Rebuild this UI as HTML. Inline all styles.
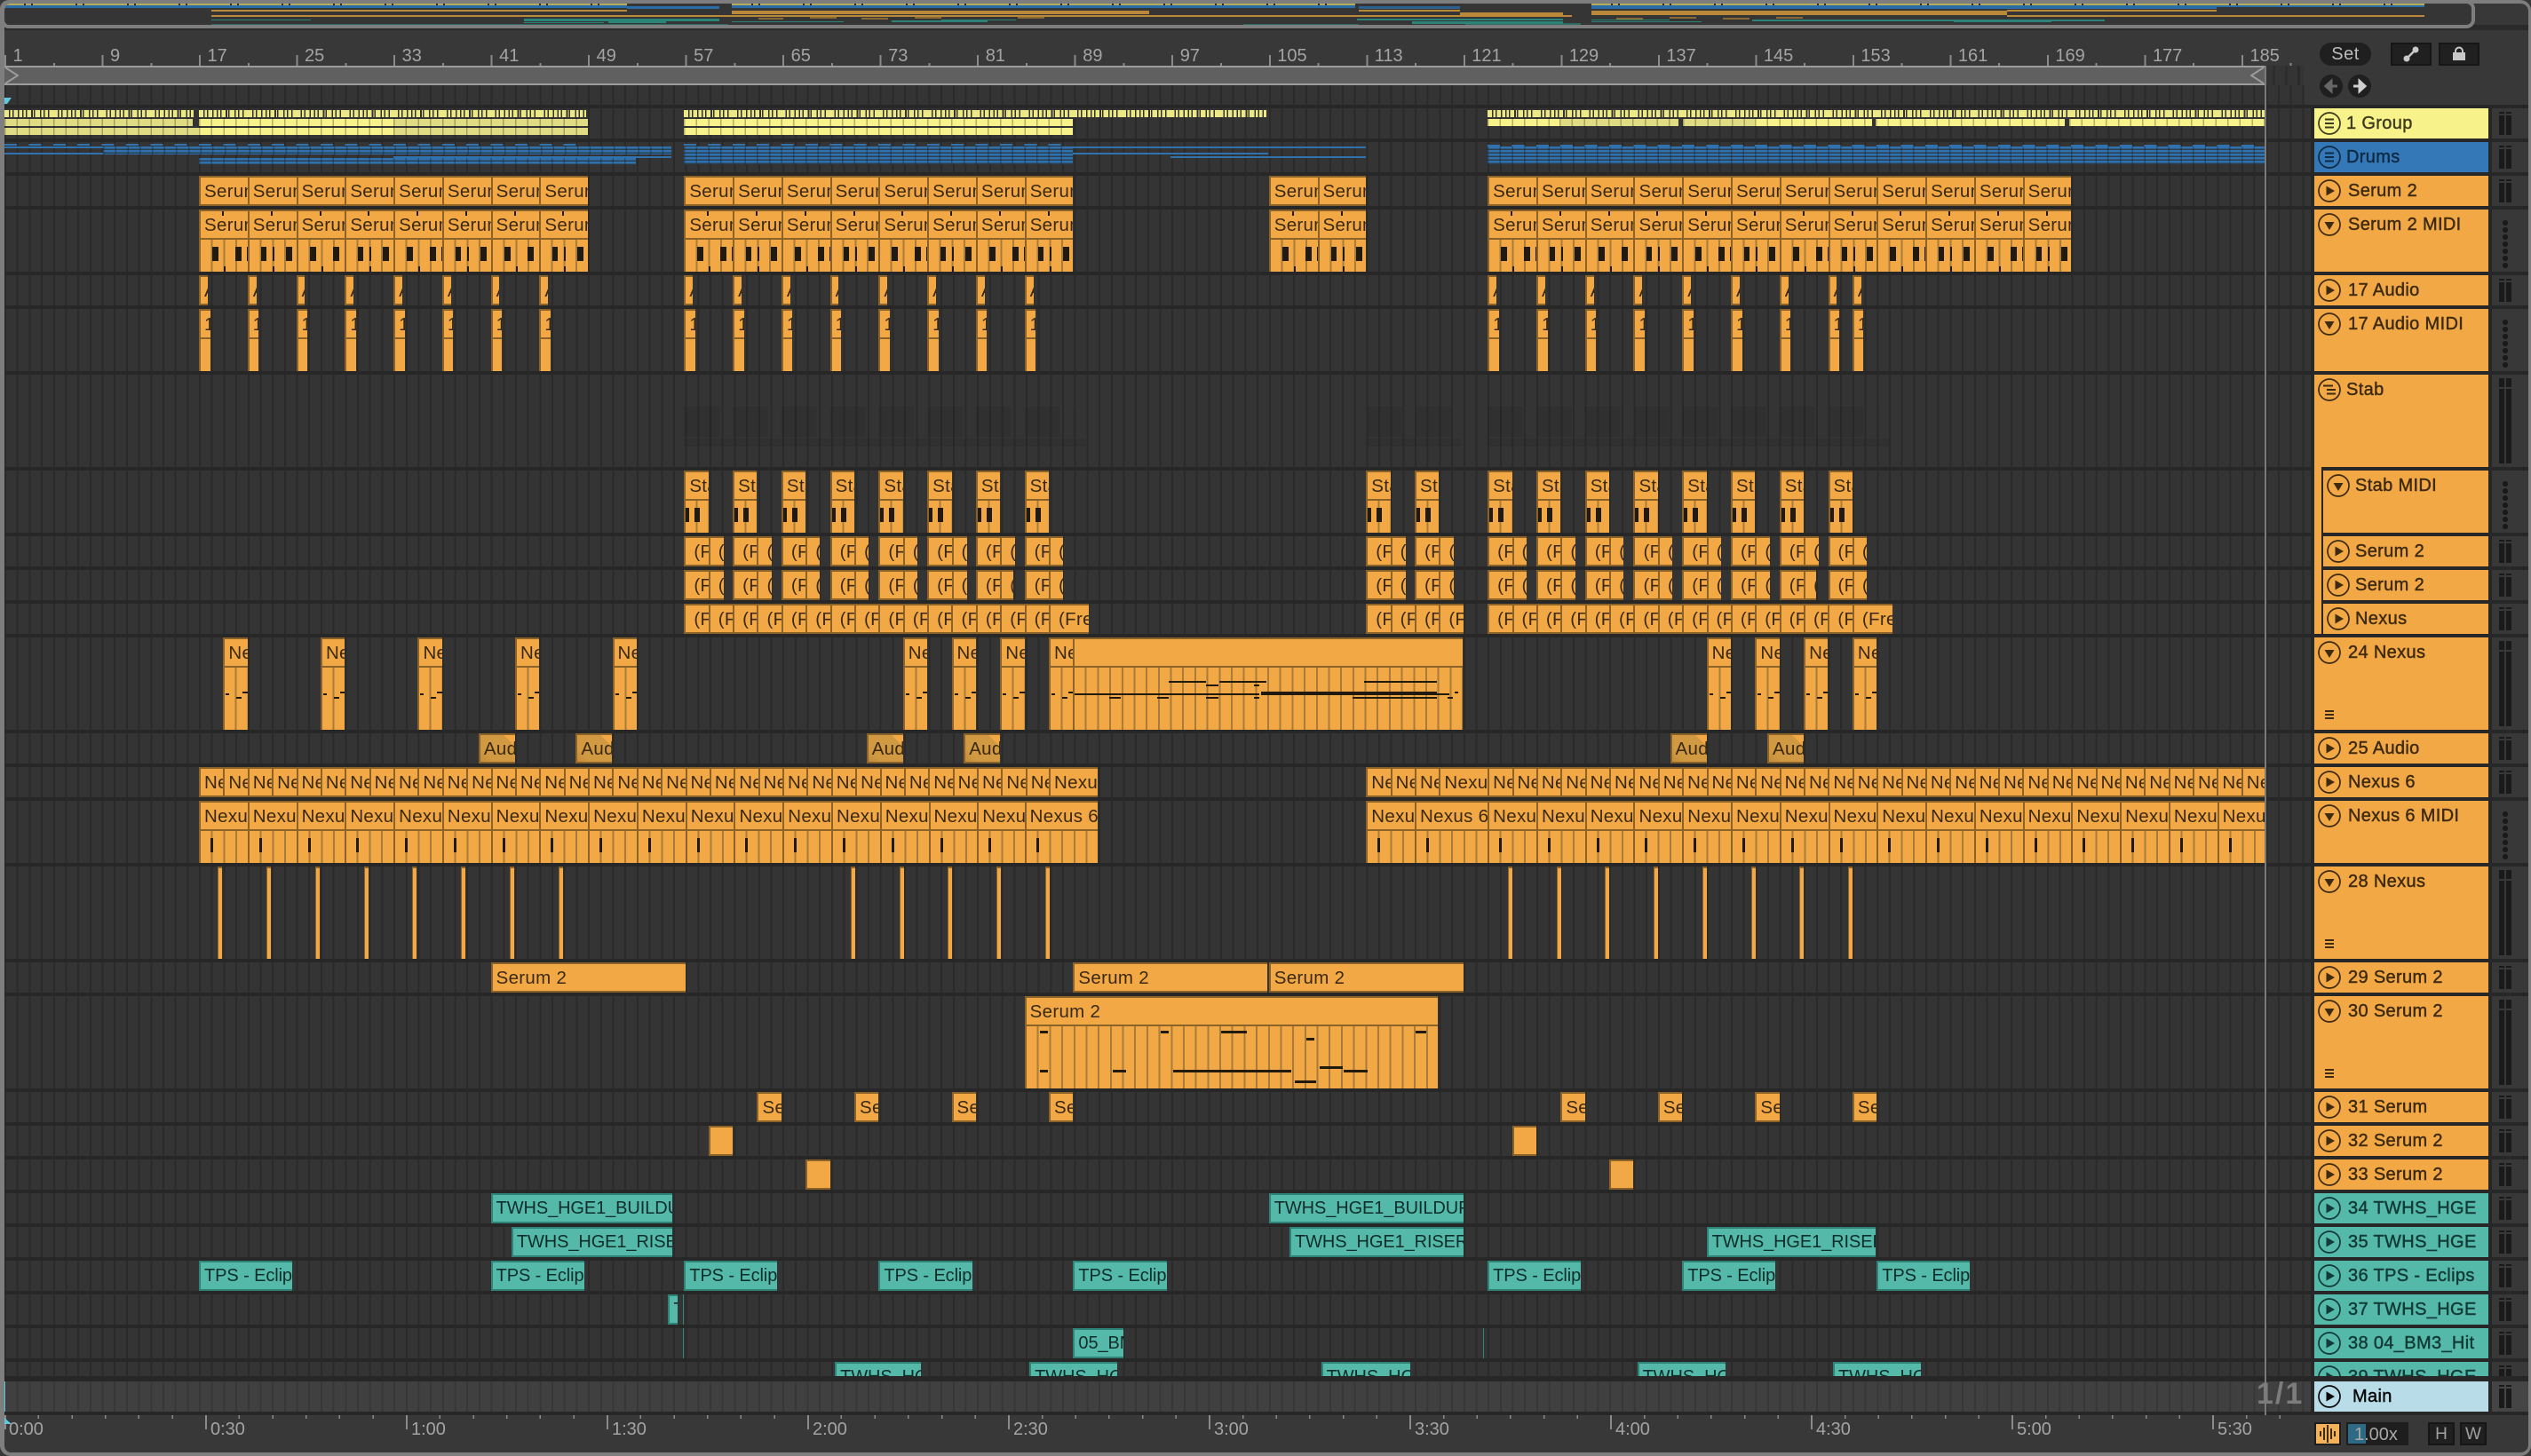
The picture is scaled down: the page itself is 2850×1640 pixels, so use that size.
<!DOCTYPE html>
<html><head><meta charset="utf-8"><title>Arrangement</title>
<style>
:root{--k:linear-gradient(#211a10,#211a10);--L:repeating-linear-gradient(90deg,transparent 0 11.69px,#a87c3a 11.69px 13.69px)}
html,body{margin:0;padding:0;width:2850px;height:1640px;overflow:hidden;background:#383838;font-family:"Liberation Sans",sans-serif}
#a{position:absolute;left:0;top:0;width:2850px;height:1640px;overflow:hidden}
#a>div,#a>svg,#a>span{position:absolute}
.bk{left:0;top:118px;width:2847px;height:1476px;background:#272727}
.r{position:absolute;left:5px;width:2597px;height:34px;overflow:hidden;background:repeating-linear-gradient(90deg,#2a2a2a 0 2px,#343434 2px 13.69px)}
.r>b,.r>u,.r>i{position:absolute;top:0;height:100%;left:calc((var(--s) - 1)*13.69px);width:calc((var(--e) - var(--s))*13.69px)}
.r>[style*="--s:57"],.r>[style*="--s:59"],.r>[style*="--s:61"],.r>[style*="--s:63"],.r>[style*="--s:65"],.r>[style*="--s:67"],.r>[style*="--s:69"],.r>[style*="--s:71"],.r>[style*="--s:72"],.r>[style*="--s:73"],.r>[style*="--s:75"],.r>[style*="--s:77"],.r>[style*="--s:79"],.r>[style*="--s:80"],.r>[style*="--s:81"],.r>[style*="--s:83"],.r>[style*="--s:85"],.r>[style*="--s:87"],.r>[style*="--s:89"]{margin-left:-1.3px}
.r>u{display:flex;text-decoration:none}
.r>u>b{position:relative;flex:1 1 0;min-width:0}
.w>b{width:calc(var(--w)*13.69px)!important}
b{display:block;box-sizing:border-box;overflow:hidden;white-space:nowrap;font-weight:400;font-size:20.5px;line-height:31px;letter-spacing:.3px;color:#3a2810;padding-left:4px;background:#f2a945;border:solid #8b6329;border-width:2px 0 2px 2px}
.m>b,.m>u>b{border-bottom:0}
.m b::after{content:"";position:absolute;left:0;right:0;top:30px;bottom:0;border-top:2px solid #8b6329;background:var(--n,none),var(--L)}
.sm b{--n:var(--k) 13px 8px/7px 16px no-repeat,var(--k) 39px 8px/7px 16px no-repeat,var(--k) 52px 8px/2px 16px no-repeat,var(--k) 26px 30px/2px 6px no-repeat;background:var(--k) 24px 0/2px 5px no-repeat,#f2a945}
.sm u b:nth-child(even){--n:var(--k) 13px 8px/6px 16px no-repeat,var(--k) 26px 8px/2px 16px no-repeat,var(--k) 41px 8px/7px 16px no-repeat,var(--k) 26px 30px/2px 6px no-repeat}
.st b{--n:var(--k) 0 8px/4px 16px no-repeat,var(--k) 10px 8px/6px 16px no-repeat}
.nx b{--n:var(--k) 1px 29px/4px 2px no-repeat,var(--k) 13px 33px/6px 2px no-repeat,var(--k) 20px 27px/6px 2px no-repeat}
.n6 b{--n:var(--k) 11px 8px/3px 16px no-repeat}
.h b,.h2 b{padding-left:9px}
.h u b:first-child{flex:0 0 27.38px}
.A b{background:linear-gradient(225deg,#f2a945 0 9px,#d19a42 9px 75%,#c48e3c)}
.T b{background:#54b9a9;border-color:#2f8478;color:#0e2d2a;font-size:20px;letter-spacing:-.1px}
.sl b{border-width:2px 0 0 1.5px}
.y{position:absolute;height:8px;background:repeating-linear-gradient(90deg,rgba(50,50,40,.35) 0 1.5px,transparent 1.5px 13.69px) ,#f8f28a}
.y.D{background:repeating-linear-gradient(90deg,rgba(50,50,40,.35) 0 1.5px,transparent 1.5px 13.69px),#e0dc84}
.y.da{background:repeating-linear-gradient(90deg,transparent 0 5px,#333 5px 6.5px,transparent 6.5px 9px,#333 9px 10.5px,transparent 10.5px 15px,#333 15px 16.5px,transparent 16.5px 20px,#333 20px 21.5px,transparent 21.5px 24px,#333 24px 25.5px,transparent 25.5px 30px,#333 30px 32px,transparent 32px 33px,#333 33px 34.5px,transparent 34.5px 40px,#333 40px 41.5px,transparent 41.5px 44px,#333 44px 45.5px,transparent 45.5px 49px,#333 49px 50.5px,transparent 50.5px 54.76px),#ece886}
.z{position:absolute;background:#2f72ad}
.z.d{background:repeating-linear-gradient(90deg,#2f72ad 0 14px,transparent 14px 27.38px)}
.z.f{background:repeating-linear-gradient(90deg,rgba(30,30,30,.4) 0 1.5px,transparent 1.5px 13.69px),repeating-linear-gradient(180deg,#2f72ad 0 2.5px,#2b3f52 2.5px 4px)}
.gh{background:repeating-linear-gradient(90deg,rgba(0,0,0,.075) 0 40px,transparent 40px 54.76px);position:absolute}
.p{left:2606px;width:196px;height:34px;box-sizing:border-box;padding-left:38px;font-size:20px;line-height:35px;letter-spacing:.35px;-webkit-text-stroke:.45px currentColor;white-space:nowrap;overflow:hidden;background:#f2a945;color:#3e2a0f}
.p svg{position:absolute;left:4px;top:4px;width:26px;height:26px;fill:currentColor;stroke:currentColor;-webkit-text-stroke:0}
.c{left:2616px;width:186px;padding-left:36px}
.c svg{left:4px}
.t70{height:70px}.t104{height:104px}
.te{background:#54b9a9;color:#123a36}
.q{left:2806px;width:41px;height:34px;background:var(--k) 8px 4px/6px 2px no-repeat,var(--k) 16px 4px/6px 2px no-repeat,var(--k) 8px 8px/6px 22px no-repeat,var(--k) 16px 8px/6px 22px no-repeat,#383838;--k:linear-gradient(#1a1a1a,#1a1a1a)}
.q.tq{height:104px;background:var(--k) 8px 4px/6px 10px no-repeat,var(--k) 16px 4px/6px 10px no-repeat,var(--k) 8px 16px/6px 84px no-repeat,var(--k) 16px 16px/6px 84px no-repeat,#383838}
.q.d{height:70px;background:#383838}
.q.d::before{content:"";position:absolute;left:11px;top:11px;width:8px;height:56px;background:radial-gradient(circle 3.2px,#1a1a1a 95%,transparent) 0 0/8px 8px}
.l{font-size:20px;line-height:22px;top:52px;color:#a4a4a4;left:calc(14.5px + (var(--s) - 1)*13.69px)}
.tl{font-size:20px;line-height:22px;top:1599px;color:#a4a4a4}
.o{height:2px}
.oy{background:repeating-linear-gradient(90deg,#b5ac5c 0 22px,#2b2b20 22px 24px,#b5ac5c 24px 30px,#2b2b20 30px 32px,#b5ac5c 32px 58px)}
.ob{background:#2a6ca6}.oo{background:#b98838}.ot{background:#2c8478}.od{background:#8a6a34}
.btn{background:#202020;border:2px solid #161616;box-sizing:border-box}
</style></head><body>
<svg width="0" height="0" style="position:absolute"><defs>
<symbol id="pl" viewBox="0 0 26 26"><circle cx="13" cy="13" r="12" fill="none" stroke-width="1.7"/><path d="M9.5 7.5L19 13L9.5 18.5Z" stroke="none"/></symbol>
<symbol id="dn" viewBox="0 0 26 26"><circle cx="13" cy="13" r="12" fill="none" stroke-width="1.7"/><path d="M7.5 10H18.5L13 19Z" stroke="none"/></symbol>
<symbol id="gr" viewBox="0 0 26 26"><circle cx="13" cy="13" r="12" fill="none" stroke-width="1.7"/><path d="M8 8.5H18M8 13H18M8 17.5H18" fill="none" stroke-width="2"/></symbol>
<symbol id="gs" viewBox="0 0 26 26"><circle cx="13" cy="13" r="12" fill="none" stroke-width="1.7"/><path d="M6 8.5H17M10 13H20M10 17.5H20" fill="none" stroke-width="2"/></symbol>
<symbol id="ml" viewBox="0 0 10 10"><path d="M0 1H10M0 5H10M0 9H10" fill="none" stroke-width="2"/></symbol>
</defs></svg>
<div id="a">
<!-- overview -->
<div style="left:0;top:28px;width:2850px;height:6px;background:#2a2a2a"></div>
<div style="left:0;top:0;width:2787px;height:32px;box-sizing:border-box;border:solid #7e7e7e;border-width:4px 4px 4px 5px;border-radius:10px;background:#353535"></div>
<div class="o oy" style="left:5px;top:4px;width:701px"></div>
<div class="o oy" style="left:824px;top:4px;width:702px"></div>
<div class="o oy" style="left:1792px;top:4px;width:938px"></div>
<div class="ob" style="left:5px;top:6px;width:701px;height:3px"></div>
<div class="ob" style="left:824px;top:6px;width:702px;height:3px"></div>
<div class="ob" style="left:706px;top:7px;width:104px;height:3px"></div>
<div class="ob" style="left:1530px;top:7px;width:114px;height:3px;opacity:.8"></div>
<div class="ob" style="left:1792px;top:6px;width:704px;height:4px"></div>
<div class="ob" style="left:2496px;top:6px;width:234px;height:2px"></div>
<div class="o oo" style="left:238px;top:11px;width:468px"></div>
<div class="oo" style="left:824px;top:12px;width:470px;height:4px"></div>
<div class="o oo" style="left:1530px;top:11px;width:114px"></div>
<div class="oo" style="left:1792px;top:12px;width:468px;height:5px"></div>
<div class="o oo" style="left:2260px;top:11px;width:236px"></div>
<div class="oo" style="left:1644px;top:14px;width:116px;height:3px"></div>
<div class="oo" style="left:238px;top:17px;width:1532px;height:1.5px"></div>
<div class="oo" style="left:2260px;top:17px;width:470px;height:1.5px"></div>
<div class="o od" style="left:854px;top:20px;width:28px"></div>
<div class="o od" style="left:912px;top:19px;width:30px"></div>
<div class="o od" style="left:970px;top:20px;width:30px"></div>
<div class="o od" style="left:1030px;top:19px;width:30px"></div>
<div class="o od" style="left:1146px;top:19px;width:30px"></div>
<div class="o od" style="left:1820px;top:20px;width:30px"></div>
<div class="o od" style="left:1880px;top:19px;width:30px"></div>
<div class="o od" style="left:1940px;top:20px;width:30px"></div>
<div class="o od" style="left:2000px;top:19px;width:30px"></div>
<div class="ot" style="left:238px;top:22px;width:112px;height:1px"></div>
<div class="ot" style="left:590px;top:21px;width:220px;height:3px"></div>
<div class="ot" style="left:590px;top:25px;width:90px;height:1px"></div>
<div class="ot" style="left:685px;top:24px;width:65px;height:2px"></div>
<div class="ot" style="left:824px;top:24px;width:126px;height:1px"></div>
<div class="ot" style="left:1004px;top:23px;width:108px;height:2px"></div>
<div class="ot" style="left:1060px;top:22px;width:84px;height:1px"></div>
<div class="ot" style="left:1528px;top:21px;width:232px;height:2px"></div>
<div class="ot" style="left:1590px;top:24px;width:170px;height:3px"></div>
<div class="ot" style="left:1792px;top:22px;width:88px;height:1px"></div>
<div class="ot" style="left:1792px;top:24px;width:124px;height:1px"></div>
<div class="ot" style="left:1973px;top:22px;width:397px;height:2px"></div>
<div class="ot" style="left:2200px;top:24px;width:110px;height:1px"></div>
<div class="ot" style="left:238px;top:27px;width:582px;height:1px;opacity:.7"></div>
<div class="ot" style="left:1400px;top:27px;width:130px;height:1px;opacity:.7"></div>
<div class="ot" style="left:1650px;top:26px;width:130px;height:2px;opacity:.7"></div>

<!-- ruler -->
<div style="left:5px;top:62px;width:2560px;height:12px;background:repeating-linear-gradient(90deg,#8a8a8a 0 2px,transparent 2px 109.52px)"></div>
<div style="left:5px;top:71px;width:2590px;height:3px;background:repeating-linear-gradient(90deg,#8a8a8a 0 2px,transparent 2px 54.76px)"></div>
<span class="l" style="--s:1">1</span><span class="l" style="--s:9">9</span><span class="l" style="--s:17">17</span><span class="l" style="--s:25">25</span><span class="l" style="--s:33">33</span><span class="l" style="--s:41">41</span><span class="l" style="--s:49">49</span><span class="l" style="--s:57">57</span><span class="l" style="--s:65">65</span><span class="l" style="--s:73">73</span><span class="l" style="--s:81">81</span><span class="l" style="--s:89">89</span><span class="l" style="--s:97">97</span><span class="l" style="--s:105">105</span><span class="l" style="--s:113">113</span><span class="l" style="--s:121">121</span><span class="l" style="--s:129">129</span><span class="l" style="--s:137">137</span><span class="l" style="--s:145">145</span><span class="l" style="--s:153">153</span><span class="l" style="--s:161">161</span><span class="l" style="--s:169">169</span><span class="l" style="--s:177">177</span><span class="l" style="--s:185">185</span>

<div class="bk"></div>
<div class="r" style="top:74px;left:2552px;width:42px;height:44px;background-position:-6px 0"></div>
<div class="r" style="top:96px;width:2590px;height:22px"></div>
<!-- loop brace -->
<div style="left:5px;top:74px;width:2545px;height:22px;box-sizing:border-box;background:#606060;border-top:2px solid #9c9c9c;border-bottom:2px solid #9c9c9c"></div>
<svg style="left:5px;top:76px" width="16" height="18"><path d="M1 0L15 9L1 18" fill="none" stroke="#9c9c9c" stroke-width="2"/></svg>
<svg style="left:2534px;top:76px" width="16" height="18"><path d="M15 0L1 9L15 18" fill="none" stroke="#9c9c9c" stroke-width="2"/></svg>
<svg style="left:5px;top:110px" width="8" height="7"><path d="M0 0H8L3 7H0Z" fill="#5fc8e0"/></svg>

<!-- row 1 group -->
<div class="r" style="top:122px">
<div class="y da" style="left:0;top:2px;width:213px"></div><div class="y da" style="left:219px;top:2px;width:436px"></div><div class="y da" style="left:765px;top:2px;width:656px"></div><div class="y da" style="left:1670px;top:2px;width:875px"></div>
<div class="y D" style="left:0;top:12px;width:212px"></div><div class="y" style="left:219px;top:12px;width:219px"></div><div class="y D" style="left:438px;top:12px;width:219px"></div><div class="y" style="left:765px;top:12px;width:438px"></div>
<div class="y" style="left:1670px;top:12px;width:81px"></div><div class="y D" style="left:1751px;top:12px;width:134px"></div><div class="y D" style="left:1890px;top:12px;width:81px"></div><div class="y" style="left:1971px;top:12px;width:132px"></div><div class="y" style="left:2107px;top:12px;width:213px"></div><div class="y" style="left:2325px;top:12px;width:220px"></div>
<div class="y D" style="left:0;top:22px;width:219px"></div><div class="y" style="left:219px;top:22px;width:219px"></div><div class="y D" style="left:438px;top:22px;width:219px"></div><div class="y" style="left:765px;top:22px;width:438px"></div>
</div>
<!-- drums -->
<div class="r" style="top:160px">
<div class="z d" style="left:0;top:2px;width:650px;height:2px"></div><div class="z d" style="left:765px;top:2px;width:430px;height:2px"></div><div class="z d" style="left:1670px;top:3px;width:875px;height:2px"></div>
<div class="z" style="left:0;top:5px;width:111px;height:2px"></div>
<div class="z f" style="left:111px;top:5px;width:640px;height:9px"></div>
<div class="z" style="left:0;top:12px;width:111px;height:2px"></div>
<div class="z" style="left:438px;top:16px;width:313px;height:2px"></div>
<div class="z f" style="left:219px;top:18px;width:492px;height:7px"></div>
<div class="z f" style="left:765px;top:5px;width:438px;height:20px"></div>
<div class="z" style="left:1203px;top:5px;width:330px;height:2px"></div>
<div class="z" style="left:1203px;top:12px;width:220px;height:2px"></div>
<div class="z" style="left:1313px;top:16px;width:220px;height:2px"></div>
<div class="z f" style="left:1670px;top:5px;width:875px;height:20px"></div>
</div>
<!-- Serum 2 -->
<div class="r" style="top:198px">
<u style="--s:17;--e:49"><b>Serum 2</b><b>Serum 2</b><b>Serum 2</b><b>Serum 2</b><b>Serum 2</b><b>Serum 2</b><b>Serum 2</b><b>Serum 2</b></u>
<u style="--s:57;--e:89"><b>Serum 2</b><b>Serum 2</b><b>Serum 2</b><b>Serum 2</b><b>Serum 2</b><b>Serum 2</b><b>Serum 2</b><b>Serum 2</b></u>
<u style="--s:105;--e:113"><b>Serum 2</b><b>Serum 2</b></u>
<u style="--s:123;--e:171"><b>Serum 2</b><b>Serum 2</b><b>Serum 2</b><b>Serum 2</b><b>Serum 2</b><b>Serum 2</b><b>Serum 2</b><b>Serum 2</b><b>Serum 2</b><b>Serum 2</b><b>Serum 2</b><b>Serum 2</b></u>
</div>
<!-- Serum 2 MIDI -->
<div class="r m sm" style="top:236px;height:70px">
<u style="--s:17;--e:49"><b>Serum 2</b><b>Serum 2</b><b>Serum 2</b><b>Serum 2</b><b>Serum 2</b><b>Serum 2</b><b>Serum 2</b><b>Serum 2</b></u>
<u style="--s:57;--e:89"><b>Serum 2</b><b>Serum 2</b><b>Serum 2</b><b>Serum 2</b><b>Serum 2</b><b>Serum 2</b><b>Serum 2</b><b>Serum 2</b></u>
<u style="--s:105;--e:113"><b>Serum 2</b><b>Serum 2</b></u>
<u style="--s:123;--e:171"><b>Serum 2</b><b>Serum 2</b><b>Serum 2</b><b>Serum 2</b><b>Serum 2</b><b>Serum 2</b><b>Serum 2</b><b>Serum 2</b><b>Serum 2</b><b>Serum 2</b><b>Serum 2</b><b>Serum 2</b></u>
</div>
<!-- 17 Audio -->
<div class="r w" style="top:310px;--w:.72">
<b style="--s:17">Audio</b><b style="--s:21">Audio</b><b style="--s:25">Audio</b><b style="--s:29">Audio</b><b style="--s:33">Audio</b><b style="--s:37">Audio</b><b style="--s:41">Audio</b><b style="--s:45">Audio</b>
<b style="--s:57">Audio</b><b style="--s:61">Audio</b><b style="--s:65">Audio</b><b style="--s:69">Audio</b><b style="--s:73">Audio</b><b style="--s:77">Audio</b><b style="--s:81">Audio</b><b style="--s:85">Audio</b>
<b style="--s:123">Audio</b><b style="--s:127">Audio</b><b style="--s:131">Audio</b><b style="--s:135">Audio</b><b style="--s:139">Audio</b><b style="--s:143">Audio</b><b style="--s:147">Audio</b><b style="--s:151">Audio</b><b style="--s:153">Audio</b>
</div>
<!-- 17 Audio MIDI -->
<div class="r w m" style="top:348px;height:70px;--w:.92">
<b style="--s:17">17 Audio</b><b style="--s:21">17 Audio</b><b style="--s:25">17 Audio</b><b style="--s:29">17 Audio</b><b style="--s:33">17 Audio</b><b style="--s:37">17 Audio</b><b style="--s:41">17 Audio</b><b style="--s:45">17 Audio</b>
<b style="--s:57">17 Audio</b><b style="--s:61">17 Audio</b><b style="--s:65">17 Audio</b><b style="--s:69">17 Audio</b><b style="--s:73">17 Audio</b><b style="--s:77">17 Audio</b><b style="--s:81">17 Audio</b><b style="--s:85">17 Audio</b>
<b style="--s:123">17 Audio</b><b style="--s:127">17 Audio</b><b style="--s:131">17 Audio</b><b style="--s:135">17 Audio</b><b style="--s:139">17 Audio</b><b style="--s:143">17 Audio</b><b style="--s:147">17 Audio</b><b style="--s:151">17 Audio</b><b style="--s:153">17 Audio</b>
</div>
<!-- Stab group -->
<div class="r" style="top:422px;height:104px">
<div class="gh" style="left:765px;top:36px;width:440px;height:34px"></div><div class="gh" style="left:765px;top:72px;width:452px;height:9px;background:rgba(0,0,0,.06)"></div>
<div class="gh" style="left:1534px;top:36px;width:106px;height:34px"></div><div class="gh" style="left:1534px;top:72px;width:106px;height:9px;background:rgba(0,0,0,.06)"></div>
<div class="gh" style="left:1670px;top:36px;width:440px;height:34px"></div><div class="gh" style="left:1670px;top:72px;width:452px;height:9px;background:rgba(0,0,0,.06)"></div>
</div>
<!-- Stab MIDI -->
<div class="r w m st" style="top:530px;height:70px;--w:2">
<b style="--s:57">Stab</b><b style="--s:61">Stab</b><b style="--s:65">Stab</b><b style="--s:69">Stab</b><b style="--s:73">Stab</b><b style="--s:77">Stab</b><b style="--s:81">Stab</b><b style="--s:85">Stab</b>
<b style="--s:113">Stab</b><b style="--s:117">Stab</b>
<b style="--s:123">Stab</b><b style="--s:127">Stab</b><b style="--s:131">Stab</b><b style="--s:135">Stab</b><b style="--s:139">Stab</b><b style="--s:143">Stab</b><b style="--s:147">Stab</b><b style="--s:151">Stab</b>
</div>
<!-- (F rows -->
<div class="r h" style="top:604px">
<u style="--s:57;--e:60.24"><b>(Freq</b><b>(Freq</b></u><u style="--s:61;--e:64.18"><b>(Freq</b><b>(Freq</b></u><u style="--s:65;--e:68.13"><b>(Freq</b><b>(Freq</b></u><u style="--s:69;--e:72.2"><b>(Freq</b><b>(Freq</b></u><u style="--s:73;--e:76.16"><b>(Freq</b><b>(Freq</b></u><u style="--s:77;--e:80.25"><b>(Freq</b><b>(Freq</b></u><u style="--s:81;--e:84.2"><b>(Freq</b><b>(Freq</b></u><u style="--s:85;--e:88.15"><b>(Freq</b><b>(Freq</b></u>
<u style="--s:113;--e:116.25"><b>(Freq</b><b>(Freq</b></u><u style="--s:117;--e:120.2"><b>(Freq</b><b>(Freq</b></u>
<u style="--s:123;--e:126.2"><b>(Freq</b><b>(Freq</b></u><u style="--s:127;--e:130.2"><b>(Freq</b><b>(Freq</b></u><u style="--s:131;--e:134.2"><b>(Freq</b><b>(Freq</b></u><u style="--s:135;--e:138.2"><b>(Freq</b><b>(Freq</b></u><u style="--s:139;--e:142.2"><b>(Freq</b><b>(Freq</b></u><u style="--s:143;--e:146.2"><b>(Freq</b><b>(Freq</b></u><u style="--s:147;--e:150.2"><b>(Freq</b><b>(Freq</b></u><u style="--s:151;--e:154.2"><b>(Freq</b><b>(Freq</b></u>
</div>
<div class="r h" style="top:642px">
<u style="--s:57;--e:60.24"><b>(Freq</b><b>(Freq</b></u><u style="--s:61;--e:64.18"><b>(Freq</b><b>(Freq</b></u><u style="--s:65;--e:68.13"><b>(Freq</b><b>(Freq</b></u><u style="--s:69;--e:72.2"><b>(Freq</b><b>(Freq</b></u><u style="--s:73;--e:76.16"><b>(Freq</b><b>(Freq</b></u><u style="--s:77;--e:80.25"><b>(Freq</b><b>(Freq</b></u><u style="--s:81;--e:84.05"><b>(Freq</b><b>(Freq</b></u><u style="--s:85;--e:88.15"><b>(Freq</b><b>(Freq</b></u>
<u style="--s:113;--e:116.25"><b>(Freq</b><b>(Freq</b></u><u style="--s:117;--e:120.2"><b>(Freq</b><b>(Freq</b></u>
<u style="--s:123;--e:126.2"><b>(Freq</b><b>(Freq</b></u><u style="--s:127;--e:130.2"><b>(Freq</b><b>(Freq</b></u><u style="--s:131;--e:134.2"><b>(Freq</b><b>(Freq</b></u><u style="--s:135;--e:138.2"><b>(Freq</b><b>(Freq</b></u><u style="--s:139;--e:142.2"><b>(Freq</b><b>(Freq</b></u><u style="--s:143;--e:146.2"><b>(Freq</b><b>(Freq</b></u><u style="--s:147;--e:150.05"><b>(Freq</b><b>(Freq</b></u><u style="--s:151;--e:154.2"><b>(Freq</b><b>(Freq</b></u>
</div>
<div class="r h2" style="top:680px">
<u style="--s:57;--e:87"><b>(Freq</b><b>(Freq</b><b>(Freq</b><b>(Freq</b><b>(Freq</b><b>(Freq</b><b>(Freq</b><b>(Freq</b><b>(Freq</b><b>(Freq</b><b>(Freq</b><b>(Freq</b><b>(Freq</b><b>(Freq</b><b>(Freq</b></u><b style="--s:87;--e:90.3">(Freq</b>
<u style="--s:113;--e:121"><b>(Freq</b><b>(Freq</b><b>(Freq</b><b>(Freq</b></u>
<u style="--s:123;--e:153"><b>(Freq</b><b>(Freq</b><b>(Freq</b><b>(Freq</b><b>(Freq</b><b>(Freq</b><b>(Freq</b><b>(Freq</b><b>(Freq</b><b>(Freq</b><b>(Freq</b><b>(Freq</b><b>(Freq</b><b>(Freq</b><b>(Freq</b></u><b style="--s:153;--e:156.3">(Freq</b>
</div>
<!-- 24 Nexus -->
<div class="r m nx" style="top:718px;height:104px">
<b style="--s:19;--e:21">Nexus</b><b style="--s:27;--e:29">Nexus</b><b style="--s:35;--e:37">Nexus</b><b style="--s:43;--e:45">Nexus</b><b style="--s:51;--e:53">Nexus</b>
<b style="--s:75;--e:77">Nexus</b><b style="--s:79;--e:81">Nexus</b><b style="--s:83;--e:85">Nexus</b><b style="--s:87;--e:89">Nexus</b>
<b style="--s:89;--e:121;--n:var(--k) 106px 15px/42px 2px no-repeat,var(--k) 163px 15px/53px 2px no-repeat,var(--k) 326px 15px/82px 2px no-repeat,var(--k) 148px 19px/14px 2px no-repeat,var(--k) 202px 19px/6px 2px no-repeat,var(--k) 0 29px/208px 2px no-repeat,var(--k) 210px 27px/198px 4px no-repeat,var(--k) 408px 29px/14px 2px no-repeat,var(--k) 39px 33px/13px 2px no-repeat,var(--k) 93px 33px/13px 2px no-repeat,var(--k) 148px 33px/14px 2px no-repeat,var(--k) 202px 33px/6px 2px no-repeat,var(--k) 313px 33px/95px 2px no-repeat,var(--k) 420px 33px/6px 2px no-repeat,var(--k) 428px 27px/4px 2px no-repeat"></b>
<b style="--s:141;--e:143">Nexus</b><b style="--s:145;--e:147">Nexus</b><b style="--s:149;--e:151">Nexus</b><b style="--s:153;--e:155">Nexus</b>
</div>
<!-- 25 Audio -->
<div class="r A" style="top:826px">
<b style="--s:40;--e:43">Audio</b><b style="--s:48;--e:51">Audio</b><b style="--s:72;--e:75">Audio</b><b style="--s:80;--e:83">Audio</b><b style="--s:138;--e:141">Audio</b><b style="--s:146;--e:149">Audio</b>
</div>
<!-- Nexus 6 -->
<div class="r" style="top:864px">
<u style="--s:17;--e:87;margin-left:0"><b>Nexus 6</b><b>Nexus 6</b><b>Nexus 6</b><b>Nexus 6</b><b>Nexus 6</b><b>Nexus 6</b><b>Nexus 6</b><b>Nexus 6</b><b>Nexus 6</b><b>Nexus 6</b><b>Nexus 6</b><b>Nexus 6</b><b>Nexus 6</b><b>Nexus 6</b><b>Nexus 6</b><b>Nexus 6</b><b>Nexus 6</b><b>Nexus 6</b><b>Nexus 6</b><b>Nexus 6</b><b>Nexus 6</b><b>Nexus 6</b><b>Nexus 6</b><b>Nexus 6</b><b>Nexus 6</b><b>Nexus 6</b><b>Nexus 6</b><b>Nexus 6</b><b>Nexus 6</b><b>Nexus 6</b><b>Nexus 6</b><b>Nexus 6</b><b>Nexus 6</b><b>Nexus 6</b><b>Nexus 6</b></u><b style="--s:87;--e:91">Nexus 6</b>
<u style="--s:113;--e:119"><b>Nexus 6</b><b>Nexus 6</b><b>Nexus 6</b></u><b style="--s:119;--e:123">Nexus 6</b>
<u style="--s:123;--e:187"><b>Nexus 6</b><b>Nexus 6</b><b>Nexus 6</b><b>Nexus 6</b><b>Nexus 6</b><b>Nexus 6</b><b>Nexus 6</b><b>Nexus 6</b><b>Nexus 6</b><b>Nexus 6</b><b>Nexus 6</b><b>Nexus 6</b><b>Nexus 6</b><b>Nexus 6</b><b>Nexus 6</b><b>Nexus 6</b><b>Nexus 6</b><b>Nexus 6</b><b>Nexus 6</b><b>Nexus 6</b><b>Nexus 6</b><b>Nexus 6</b><b>Nexus 6</b><b>Nexus 6</b><b>Nexus 6</b><b>Nexus 6</b><b>Nexus 6</b><b>Nexus 6</b><b>Nexus 6</b><b>Nexus 6</b><b>Nexus 6</b><b>Nexus 6</b></u>
</div>
<!-- Nexus 6 MIDI -->
<div class="r m n6" style="top:902px;height:70px">
<u style="--s:17;--e:85"><b>Nexus 6</b><b>Nexus 6</b><b>Nexus 6</b><b>Nexus 6</b><b>Nexus 6</b><b>Nexus 6</b><b>Nexus 6</b><b>Nexus 6</b><b>Nexus 6</b><b>Nexus 6</b><b>Nexus 6</b><b>Nexus 6</b><b>Nexus 6</b><b>Nexus 6</b><b>Nexus 6</b><b>Nexus 6</b><b>Nexus 6</b></u><b style="--s:85;--e:91">Nexus 6</b>
<b style="--s:113;--e:117">Nexus 6</b><b style="--s:117;--e:123">Nexus 6</b>
<u style="--s:123;--e:187"><b>Nexus 6</b><b>Nexus 6</b><b>Nexus 6</b><b>Nexus 6</b><b>Nexus 6</b><b>Nexus 6</b><b>Nexus 6</b><b>Nexus 6</b><b>Nexus 6</b><b>Nexus 6</b><b>Nexus 6</b><b>Nexus 6</b><b>Nexus 6</b><b>Nexus 6</b><b>Nexus 6</b><b>Nexus 6</b></u>
</div>
<!-- 28 Nexus -->
<div class="r w sl" style="top:976px;height:104px;--w:.25">
<b style="--s:18.55"></b><b style="--s:22.55"></b><b style="--s:26.55"></b><b style="--s:30.55"></b><b style="--s:34.55"></b><b style="--s:38.55"></b><b style="--s:42.55"></b><b style="--s:46.55"></b>
<b style="--s:70.6"></b><b style="--s:74.6"></b><b style="--s:78.6"></b><b style="--s:82.6"></b><b style="--s:86.6"></b>
<b style="--s:124.65"></b><b style="--s:128.65"></b><b style="--s:132.65"></b><b style="--s:136.65"></b><b style="--s:140.65"></b><b style="--s:144.65"></b><b style="--s:148.65"></b><b style="--s:152.65"></b>
</div>
<!-- 29 Serum 2 -->
<div class="r" style="top:1084px">
<b style="--s:41;--e:57">Serum 2</b><b style="--s:89;--e:105">Serum 2</b><b style="--s:105;--e:121">Serum 2</b>
</div>
<!-- 30 Serum 2 -->
<div class="r m" style="top:1122px;height:104px">
<b style="--s:85;--e:119;--n:var(--k) 15px 5px/9px 3px no-repeat,var(--k) 151px 5px/9px 3px no-repeat,var(--k) 219px 5px/29px 3px no-repeat,var(--k) 438px 5px/12px 3px no-repeat,var(--k) 315px 13px/9px 3px no-repeat,var(--k) 15px 49px/9px 3px no-repeat,var(--k) 97px 49px/15px 3px no-repeat,var(--k) 165px 49px/133px 3px no-repeat,var(--k) 357px 49px/27px 3px no-repeat,var(--k) 330px 45px/26px 3px no-repeat,var(--k) 302px 61px/24px 3px no-repeat">Serum 2</b>
</div>
<!-- 31 Serum -->
<div class="r w" style="top:1230px;--w:2">
<b style="--s:63">Serum 2</b><b style="--s:71">Serum 2</b><b style="--s:79">Serum 2</b><b style="--s:87">Serum 2</b><b style="--s:129">Serum 2</b><b style="--s:137">Serum 2</b><b style="--s:145">Serum 2</b><b style="--s:153">Serum 2</b>
</div>
<div class="r w" style="top:1268px;--w:2"><b style="--s:59"></b><b style="--s:125"></b></div>
<div class="r w" style="top:1306px;--w:2"><b style="--s:67"></b><b style="--s:133"></b></div>
<!-- teal -->
<div class="r T" style="top:1344px"><b style="--s:41;--e:55.9">TWHS_HGE1_BUILDUP</b><b style="--s:105;--e:121">TWHS_HGE1_BUILDUP</b></div>
<div class="r T" style="top:1382px"><b style="--s:42.7;--e:55.9">TWHS_HGE1_RISER</b><b style="--s:106.7;--e:121">TWHS_HGE1_RISER</b><b style="--s:141;--e:154.9">TWHS_HGE1_RISER</b></div>
<div class="r T w" style="top:1420px;--w:7.68"><b style="--s:17">TPS - Eclipse</b><b style="--s:41">TPS - Eclipse</b><b style="--s:57">TPS - Eclipse</b><b style="--s:73">TPS - Eclipse</b><b style="--s:89">TPS - Eclipse</b><b style="--s:123">TPS - Eclipse</b><b style="--s:139">TPS - Eclipse</b><b style="--s:155">TPS - Eclipse</b></div>
<div class="r T" style="top:1458px"><b style="--s:55.6;--e:56.4">TWHS</b><i style="--s:56.8;--e:56.87;background:#2f8478"></i></div>
<div class="r T" style="top:1496px"><i style="--s:56.8;--e:56.87;background:#2f8478"></i><b style="--s:89;--e:93.1">05_BM3_Hit</b><i style="--s:122.6;--e:122.72;background:#2f8478"></i></div>
<div class="r T" style="top:1534px;height:16px"><b style="--s:69.4;--e:76.5;height:34px">TWHS_HGE1</b><b style="--s:85.4;--e:92.6;height:34px">TWHS_HGE1</b><b style="--s:109.3;--e:116.6;height:34px">TWHS_HGE1</b><b style="--s:135.3;--e:142.6;height:34px">TWHS_HGE1</b><b style="--s:151.4;--e:158.6;height:34px">TWHS_HGE1</b></div>
<!-- main row -->
<div class="r" style="top:1556px;background:repeating-linear-gradient(90deg,#373737 0 2px,#404040 2px 13.69px)"></div>
<div style="left:4px;top:1556px;width:2px;height:34px;background:#5fc8e0"></div>
<div style="left:2550px;top:74px;width:2px;height:1520px;background:#7b7b7b"></div>
<span style="left:2541px;top:1550px;font-size:34px;line-height:40px;font-weight:bold;letter-spacing:2px;color:#7c7c7c">1/1</span>

<!-- panel -->
<div class="p" style="top:122px;padding-left:36px;background:#f8f28a;color:#3d3b1e"><svg><use href="#gr"/></svg>1 Group</div>
<div class="p" style="top:160px;padding-left:36px;background:#3478b8;color:#0e2a44"><svg><use href="#gr"/></svg>Drums</div>
<div class="p" style="top:198px"><svg><use href="#pl"/></svg>Serum 2</div>
<div class="p t70" style="top:236px"><svg><use href="#dn"/></svg>Serum 2 MIDI</div>
<div class="p" style="top:310px"><svg><use href="#pl"/></svg>17 Audio</div>
<div class="p t70" style="top:348px"><svg><use href="#dn"/></svg>17 Audio MIDI</div>
<div class="p t104" style="top:422px;padding-left:36px"><svg><use href="#gs"/></svg>Stab</div>
<div style="left:2606px;top:526px;width:8px;height:188px;background:#f2a945"></div>
<div class="p c t70" style="top:530px"><svg><use href="#dn"/></svg>Stab MIDI</div>
<div class="p c" style="top:604px"><svg><use href="#pl"/></svg>Serum 2</div>
<div class="p c" style="top:642px"><svg><use href="#pl"/></svg>Serum 2</div>
<div class="p c" style="top:680px"><svg><use href="#pl"/></svg>Nexus</div>
<div class="p t104" style="top:718px"><svg><use href="#dn"/></svg>24 Nexus<svg style="left:12px;top:82px;width:10px;height:10px"><use href="#ml"/></svg></div>
<div class="p" style="top:826px"><svg><use href="#pl"/></svg>25 Audio</div>
<div class="p" style="top:864px"><svg><use href="#pl"/></svg>Nexus 6</div>
<div class="p t70" style="top:902px"><svg><use href="#dn"/></svg>Nexus 6 MIDI</div>
<div class="p t104" style="top:976px"><svg><use href="#dn"/></svg>28 Nexus<svg style="left:12px;top:82px;width:10px;height:10px"><use href="#ml"/></svg></div>
<div class="p" style="top:1084px"><svg><use href="#pl"/></svg>29 Serum 2</div>
<div class="p t104" style="top:1122px"><svg><use href="#dn"/></svg>30 Serum 2<svg style="left:12px;top:82px;width:10px;height:10px"><use href="#ml"/></svg></div>
<div class="p" style="top:1230px"><svg><use href="#pl"/></svg>31 Serum</div>
<div class="p" style="top:1268px"><svg><use href="#pl"/></svg>32 Serum 2</div>
<div class="p" style="top:1306px"><svg><use href="#pl"/></svg>33 Serum 2</div>
<div class="p te" style="top:1344px"><svg><use href="#pl"/></svg>34 TWHS_HGE</div>
<div class="p te" style="top:1382px"><svg><use href="#pl"/></svg>35 TWHS_HGE</div>
<div class="p te" style="top:1420px"><svg><use href="#pl"/></svg>36 TPS - Eclips</div>
<div class="p te" style="top:1458px"><svg><use href="#pl"/></svg>37 TWHS_HGE</div>
<div class="p te" style="top:1496px"><svg><use href="#pl"/></svg>38 04_BM3_Hit</div>
<div class="p te" style="top:1534px;height:16px"><svg><use href="#pl"/></svg>39 TWHS_HGE</div>
<div class="p" style="top:1556px;background:#b8dde8;color:#0a0a0a;padding-left:43px"><svg><use href="#pl"/></svg>Main</div>

<!-- meters -->
<div class="q" style="top:122px"></div><div class="q" style="top:160px"></div><div class="q" style="top:198px"></div><div class="q d" style="top:236px"></div><div class="q" style="top:310px"></div><div class="q d" style="top:348px"></div><div class="q tq" style="top:422px"></div><div class="q d" style="top:530px"></div><div class="q" style="top:604px"></div><div class="q" style="top:642px"></div><div class="q" style="top:680px"></div><div class="q tq" style="top:718px"></div><div class="q" style="top:826px"></div><div class="q" style="top:864px"></div><div class="q d" style="top:902px"></div><div class="q tq" style="top:976px"></div><div class="q" style="top:1084px"></div><div class="q tq" style="top:1122px"></div><div class="q" style="top:1230px"></div><div class="q" style="top:1268px"></div><div class="q" style="top:1306px"></div><div class="q" style="top:1344px"></div><div class="q" style="top:1382px"></div><div class="q" style="top:1420px"></div><div class="q" style="top:1458px"></div><div class="q" style="top:1496px"></div><div class="q" style="top:1534px;height:16px"></div><div class="q" style="top:1556px;background-color:#454545"></div>

<!-- top right controls -->
<div style="left:2612px;top:48px;width:58px;height:26px;border-radius:13px;background:#1f1f1f;color:#bcbcbc;font-size:20px;line-height:27px;text-align:center;letter-spacing:.5px">Set</div>
<div class="btn" style="left:2692px;top:48px;width:46px;height:26px"><svg width="42" height="22" style="position:absolute;left:0;top:0"><path d="M17 15L25 7" stroke="#c8c8c8" stroke-width="2.5"/><circle cx="16" cy="16" r="3.5" fill="#c8c8c8"/><circle cx="26" cy="6" r="3.5" fill="#c8c8c8"/></svg></div>
<div class="btn" style="left:2746px;top:48px;width:46px;height:26px"><svg width="42" height="22" style="position:absolute;left:0;top:0"><path d="M17 10V7.5a4 4 0 0 1 8 0V10" fill="none" stroke="#c8c8c8" stroke-width="2"/><rect x="14" y="9" width="14" height="9" fill="#c8c8c8"/></svg></div>
<svg style="left:2612px;top:84px" width="26" height="26"><circle cx="13" cy="13" r="13" fill="#1f1f1f"/><path d="M20 13H8M13 7.5L7 13L13 18.5Z" stroke="#666" stroke-width="3" fill="#666"/></svg>
<svg style="left:2644px;top:84px" width="26" height="26"><circle cx="13" cy="13" r="13" fill="#1f1f1f"/><path d="M6 13H18M13 7.5L19 13L13 18.5Z" stroke="#cfcfcf" stroke-width="3" fill="#cfcfcf"/></svg>

<!-- bottom time ruler -->
<div style="left:5px;top:1594px;width:2590px;height:16px;background:repeating-linear-gradient(90deg,#8a8a8a 0 2px,transparent 2px 226px)"></div>
<div style="left:5px;top:1594px;width:2590px;height:4px;background:repeating-linear-gradient(90deg,#8a8a8a 0 1.5px,transparent 1.5px 37.67px)"></div>
<svg style="left:5px;top:1597px" width="8" height="7"><path d="M0 0L8 7H0Z" fill="#5fc8e0"/></svg>
<span class="tl" style="left:10px">0:00</span><span class="tl" style="left:237px">0:30</span><span class="tl" style="left:463px">1:00</span><span class="tl" style="left:689px">1:30</span><span class="tl" style="left:915px">2:00</span><span class="tl" style="left:1141px">2:30</span><span class="tl" style="left:1367px">3:00</span><span class="tl" style="left:1593px">3:30</span><span class="tl" style="left:1819px">4:00</span><span class="tl" style="left:2045px">4:30</span><span class="tl" style="left:2271px">5:00</span><span class="tl" style="left:2497px">5:30</span>

<!-- bottom right controls -->
<div style="left:2606px;top:1602px;width:30px;height:26px;background:#1e1e1e"></div>
<svg style="left:2608px;top:1604px" width="26" height="22"><rect width="26" height="22" fill="#f4b35a"/><path d="M5 8V14M9 4V18M13 1V21M17 5V17M21 8V14" stroke="#2a1e0c" stroke-width="1.8"/></svg>
<div style="left:2642px;top:1602px;width:70px;height:26px;background:#1e1e1e"></div>
<div style="left:2644px;top:1604px;width:20px;height:22px;background:#2f6a85"></div>
<span style="left:2651px;top:1603px;font-size:20px;line-height:26px;color:#a8a8a8">1.00x</span>
<div class="btn" style="left:2734px;top:1602px;width:30px;height:26px;color:#a0a0a0;font-size:19px;line-height:23px;text-align:center">H</div>
<div class="btn" style="left:2770px;top:1602px;width:30px;height:26px;color:#a0a0a0;font-size:19px;line-height:23px;text-align:center">W</div>

<!-- frame -->
<div style="left:0;top:0;width:2850px;height:1640px;box-sizing:border-box;border:solid #7e7e7e;border-width:4px 3px 4px 5px;border-radius:12px;pointer-events:none"></div>
</div>
</body></html>
